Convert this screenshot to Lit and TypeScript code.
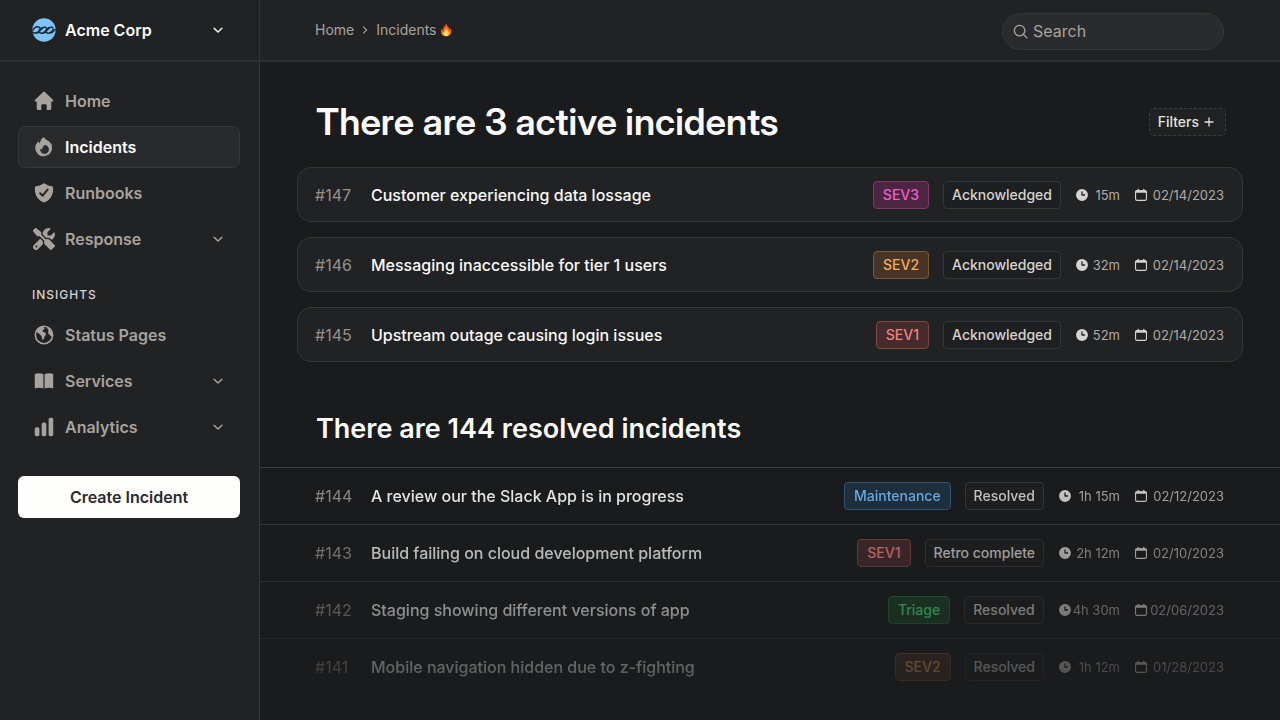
import { LitElement, html, css, svg } from "lit";
import { customElement, property } from "lit/decorators.js";

const icons: Record<string, unknown> = {
  home: svg`<path fill="currentColor" d="M10.8 1.8a1.15 1.15 0 0 0-1.6 0L1.7 9a.85.85 0 0 0 .6 1.45H3.4v6.7c0 .6.45 1.05 1.05 1.05h2.3c.45 0 .8-.35.8-.8v-3.3c0-.6.45-1.05 1.05-1.05h2.8c.6 0 1.05.45 1.05 1.05v3.3c0 .45.35.8.8.8h2.3c.6 0 1.05-.45 1.05-1.05v-6.7h1.1A.85.85 0 0 0 18.3 9z"/>`,
  fire: svg`<path fill="currentColor" fill-rule="evenodd" d="M10.3 1.6a.8.8 0 0 0-1.25-.2C7.6 2.8 6.7 4.5 6.3 6.6c-.4-.3-.7-.7-.95-1.15a.65.65 0 0 0-1.05-.1A7.7 7.7 0 1 0 14.2 4.6c-1.5-.6-3-1.6-3.9-3zM10.9 8.2c-1.6.9-2.5 2.4-2.7 4.2-.6-.2-1.2-.5-1.7-.9a4 4 0 1 0 4.4-3.3z"/>`,
  shield: svg`<path fill="currentColor" fill-rule="evenodd" d="M9.4 1.3a1 1 0 0 1 1.2 0 12.4 12.4 0 0 0 6.7 2.6.9.9 0 0 1 .85.75c.1.75.15 1.55.15 2.35 0 5.2-3.2 9.7-7.9 11.5a1.2 1.2 0 0 1-.8 0C4.9 16.7 1.7 12.2 1.7 7c0-.8.05-1.6.15-2.35a.9.9 0 0 1 .85-.75A12.4 12.4 0 0 0 9.4 1.3zM14.1 7.2a.9.9 0 0 0-1.3-1.15L8.7 11.1 7.2 9.6a.9.9 0 0 0-1.3 1.3l2.25 2.25a.9.9 0 0 0 1.35-.1z"/>`,
  tools: svg`<g transform="scale(.0390625)"><path fill="currentColor" fill-rule="evenodd" d="M78.6 5C69.1-2.4 55.6-1.5 47 7L7 47c-8.5 8.5-9.4 22-2.1 31.6l80 104c4.5 5.9 11.6 9.4 19 9.4h54.1l109 109c-14.7 29-10 65.4 14.3 89.6l112 112c12.5 12.5 32.8 12.5 45.3 0l64-64c12.5-12.5 12.5-32.8 0-45.3l-112-112c-24.2-24.2-60.6-29-89.6-14.3l-109-109V104c0-7.5-3.5-14.5-9.4-19L78.6 5zM19.9 396.1C7.2 408.8 0 426.1 0 444.1C0 481.6 30.4 512 67.9 512c18 0 35.3-7.2 48-19.9L233.7 374.3c-7.8-20.9-9-43.6-3.6-65.1l-61.7-61.7L19.9 396.1zM512 144c0-10.5-1.1-20.7-3.2-30.5c-2.4-11.2-16.1-14.1-24.2-6l-63.9 63.9c-3 3-7.1 4.7-11.3 4.7H352c-8.8 0-16-7.2-16-16V102.6c0-4.2 1.7-8.3 4.7-11.3l63.9-63.9c8.1-8.1 5.2-21.8-6-24.2C388.7 1.1 378.5 0 368 0C288.5 0 224 64.5 224 144l0 .8 85.3 85.3c36-9.1 75.8 .5 104 28.7L429 274.5c49-23 83-72.8 83-130.5zM56 432a24 24 0 1 1 48 0 24 24 0 1 1 -48 0z"/></g>`,
  globe: svg`<circle cx="10" cy="10" r="7.9" fill="none" stroke="currentColor" stroke-width="1.4"/><path fill="currentColor" d="M2.8 6.8 5.6 3.2 9 2.3c1 .8 1.5 1.3 1.3 2.1-.2.8-1.3.9-1.5 1.7-.2.7.5 1.2 1.3 1.4 1.2.3 1.9 1.1 1.6 2.1-.3.9-1.1 1.5-1.3 2.5-.2 1-.7 2.1-1.5 2.3-.8-.4-.8-1.7-1-2.7-.2-.9-1-1.4-1.7-2.1C5.3 8.7 4.2 7.6 2.8 6.8zM13 3l2.6 1.8 1.9 3.4.2 2.8c-1 .6-1.7.2-2.2-.8-.5-.9-1.5-1-1.7-2.1-.2-1 .5-1.5.2-2.4C13.7 4.9 12.7 4.2 13 3z"/>`,
  book: svg`<path fill="currentColor" d="M9.45 3.9v13C7.4 16 4.6 15.9 2.3 16.6a.55.55 0 0 1-.7-.5V4.3c0-.4.2-.7.6-.85 2.3-.8 5.1-.7 7.25.45zM10.55 3.9v13c2.05-.9 4.85-1 7.15-.3a.55.55 0 0 0 .7-.5V4.3c0-.4-.2-.7-.6-.85-2.3-.8-5.1-.7-7.25.45z"/>`,
  chart: svg`<g fill="currentColor"><rect x="1.6" y="10.2" width="4.2" height="8.2" rx="1.5"/><rect x="7.9" y="5.9" width="4.2" height="12.5" rx="1.5"/><rect x="14.2" y="1.7" width="4.2" height="16.7" rx="1.5"/></g>`,
  down: svg`<path fill="none" stroke="currentColor" stroke-width="2.4" stroke-linecap="round" stroke-linejoin="round" d="m3.5 7 6.5 6.5L16.5 7"/>`,
  right: svg`<path fill="none" stroke="currentColor" stroke-width="2.8" stroke-linecap="round" stroke-linejoin="round" d="m6 2 8 8-8 8"/>`,
  search: svg`<circle cx="8.8" cy="8.8" r="7" fill="none" stroke="currentColor" stroke-width="1.8"/><path stroke="currentColor" stroke-width="1.8" stroke-linecap="round" d="m14 14 4.5 4.5"/>`,
  plus: svg`<path stroke="currentColor" stroke-width="2.6" stroke-linecap="round" d="M10 2v16M2 10h16"/>`,
  clock: svg`<path fill="currentColor" fill-rule="evenodd" d="M10 1.5a8.5 8.5 0 1 0 0 17 8.5 8.5 0 0 0 0-17zM10.9 5.6a.9.9 0 0 0-1.8 0V10c0 .5.4.9.9.9h3.7a.9.9 0 0 0 0-1.8h-2.8z"/>`,
  calendar: svg`<rect x="2.2" y="4" width="15.6" height="13.6" rx="2.3" fill="none" stroke="currentColor" stroke-width="1.6"/><path fill="currentColor" d="M4 3.2h1V2.1a1 1 0 0 1 2 0v1.1h6V2.1a1 1 0 0 1 2 0v1.1h1a2.4 2.4 0 0 1 2.4 2.4v1.3H1.6V5.6A2.4 2.4 0 0 1 4 3.2z"/>`,
};

@customElement("app-icon")
class AppIcon extends LitElement {
  @property() name = "";
  static styles = css`
    :host { display: block; flex: none; width: 22px; height: 22px; }
    .glyph { display: block; width: 100%; height: 100%; overflow: visible; }
  `;
  render() {
    return html`<svg class="glyph" viewBox="0 0 20 20" aria-hidden="true">${icons[this.name]}</svg>`;
  }
}

interface Incident {
  id: number;
  title: string;
  tag: string;
  tone: string;
  status: string;
  duration: string;
  date: string;
}

const active: Incident[] = [
  { id: 147, title: "Customer experiencing data lossage", tag: "SEV3", tone: "pink", status: "Acknowledged", duration: "15m", date: "02/14/2023" },
  { id: 146, title: "Messaging inaccessible for tier 1 users", tag: "SEV2", tone: "orange", status: "Acknowledged", duration: "32m", date: "02/14/2023" },
  { id: 145, title: "Upstream outage causing login issues", tag: "SEV1", tone: "red", status: "Acknowledged", duration: "52m", date: "02/14/2023" },
];

const resolved: Incident[] = [
  { id: 144, title: "A review our the Slack App is in progress", tag: "Maintenance", tone: "blue", status: "Resolved", duration: "1h 15m", date: "02/12/2023" },
  { id: 143, title: "Build failing on cloud development platform", tag: "SEV1", tone: "red", status: "Retro complete", duration: "2h 12m", date: "02/10/2023" },
  { id: 142, title: "Staging showing different versions of app", tag: "Triage", tone: "green", status: "Resolved", duration: "4h 30m", date: "02/06/2023" },
  { id: 141, title: "Mobile navigation hidden due to z-fighting", tag: "SEV2", tone: "orange", status: "Resolved", duration: "1h 12m", date: "01/28/2023" },
];

@customElement("incident-row")
class IncidentRow extends LitElement {
  @property({ attribute: false }) incident!: Incident;
  @property({ type: Boolean }) long = false;
  static styles = css`
    :host { display: flex; align-items: center; height: 100%; }
    .id { flex: none; width: 56px; font-size: 16px; color: #96918f; }
    .title { flex: 1; min-width: 0; font-size: 16px; font-weight: 500; color: #fafafa; text-decoration: none; white-space: nowrap; overflow: hidden; text-overflow: ellipsis; }
    .meta { display: flex; align-items: center; gap: 14px; font-size: 14px; white-space: nowrap; }
    .tag { box-sizing: border-box; height: 28px; padding: 0 8px; border: 1px solid #363737; border-radius: 4px; background: #1e1f20; color: #d6d3d1; font-weight: 500; line-height: 26px; }
    .tone { padding: 0 9px; }
    .pink { background: #4b2542; border-color: #7c3a6a; color: #f05fcb; }
    .orange { background: #463428; border-color: #80562f; color: #f9ab5c; }
    .red { background: #452b2d; border-color: #83443f; color: #f5827c; }
    .blue { background: #1f3140; border-color: #2f5c85; color: #70b8f5; }
    .green { background: #1b4227; border-color: #236f3b; color: #4be878; }
    .fact { display: flex; align-items: center; justify-content: space-between; gap: 1px; font-size: 13px; color: #b0aba8; }
    .duration { min-width: 45px; }
    .long { min-width: 62px; }
    .date { min-width: 90px; }
    .small { width: 14px; height: 14px; color: #d6d3d1; }
  `;
  render() {
    const i = this.incident;
    return html`
      <span class="id">#${i.id}</span>
      <a class="title" href="#${i.id}">${i.title}</a>
      <div class="meta">
        <span class="tag tone ${i.tone}">${i.tag}</span>
        <span class="tag">${i.status}</span>
        <span class="fact duration ${this.long ? "long" : ""}"><app-icon class="small" name="clock"></app-icon>${i.duration}</span>
        <span class="fact date"><app-icon class="small" name="calendar"></app-icon>${i.date}</span>
      </div>`;
  }
}

@customElement("app-root")
class AppRoot extends LitElement {
  static styles = css`
    :host { display: grid; grid-template-columns: 260px minmax(0, 1fr); min-height: 100vh; background: #1a1b1c; color: #fafafa; font-family: Inter, "Liberation Sans", sans-serif; font-size: 16px; line-height: 24px; }
    * { box-sizing: border-box; }
    h1, h2, h3, ul { margin: 0; padding: 0; list-style: none; }
    button { font: inherit; cursor: pointer; }
    .sidebar { border-right: 1px solid #343536; background: #212223; }
    .account { display: flex; align-items: center; gap: 9px; width: 100%; height: 62px; padding: 0 35px 0 32px; border: 0; border-bottom: 2px solid #2d2e2f; background: none; color: #fafafa; font-weight: 600; text-align: left; }
    .logo { width: 24px; height: 24px; }
    .grow { flex: 1; }
    .chevron { width: 12px; height: 12px; }
    .nav { display: flex; flex-direction: column; padding: 18px 19px 0 18px; }
    .list { display: flex; flex-direction: column; gap: 4px; }
    .item { display: flex; align-items: center; gap: 10px; height: 42px; padding: 0 15px 0 14px; border: 1px solid transparent; border-radius: 7px; color: #a8a29e; font-weight: 600; text-decoration: none; }
    .current { border-color: #353637; background: #282a2b; color: #fafafa; }
    .item app-icon { color: #a8a29e; }
    .caption { padding: 25px 14px 9px; font-size: 12px; line-height: 20px; font-weight: 500; letter-spacing: 1px; color: #d6d3d1; }
    .create { height: 42px; margin-top: 28px; border: 0; border-radius: 6px; background: #fefefd; color: #2b2b2c; font-weight: 600; }
    .page { display: flex; flex-direction: column; min-width: 0; }
    .topbar { display: flex; align-items: center; justify-content: space-between; height: 62px; padding: 0 56px 0 55px; border-bottom: 2px solid #2d2e2f; background: #212223; }
    .crumbs { display: flex; align-items: center; gap: 7px; color: #a8a29e; font-size: 14px; }
    .crumbs a { color: inherit; text-decoration: none; }
    .crumbs .chevron { width: 8px; height: 8px; }
    .here { display: flex; align-items: center; gap: 3px; }
    .flame { width: 12px; height: 14px; }
    .search { display: flex; align-items: center; gap: 5px; width: 222px; height: 37px; margin-top: 2px; padding: 0 10px; border: 1px solid #363838; border-radius: 19px; background: #292b2c; color: #a8a29e; }
    .search app-icon { width: 15px; height: 15px; }
    .search input { flex: 1; min-width: 0; padding: 0; border: 0; outline: 0; background: none; color: #fafafa; font: inherit; }
    .search input::placeholder { color: #a8a29e; opacity: 1; }
    .headline { display: flex; align-items: center; justify-content: space-between; padding: 35px 54px 21px 56px; }
    h1 { font-family: "Inter Display", Inter, "Liberation Sans", sans-serif; font-size: 37px; line-height: 49px; font-weight: 600; }
    h2 { padding: 48px 56px 20px; font-size: 27px; line-height: 37px; font-weight: 600; }
    .filters { display: flex; align-items: center; gap: 5px; height: 28px; padding: 0 11px 0 8px; border: 1px dashed #3b3c3c; border-radius: 5px; background: #202122; color: #e2e0de; font-size: 14px; font-weight: 500; }
    .filters app-icon { width: 10px; height: 10px; }
    .cards { display: flex; flex-direction: column; gap: 15px; padding: 0 37px; }
    .card { height: 55px; padding: 0 18px 0 17px; border: 1px solid #353737; border-radius: 14px; background: #212223; }
    .rows { mask-image: linear-gradient(#000 0%, transparent 130%); }
    .row { height: 57px; padding: 0 56px 0 55px; border-top: 1px solid #3a3b3c; }
  `;

  private item(icon: string, label: string, more = false, current = false) {
    return html`<li><a class="item ${current ? "current" : ""}" href="#${label}">
      <app-icon name=${icon}></app-icon><span class="grow">${label}</span>
      ${more ? html`<app-icon class="chevron" name="down"></app-icon>` : ""}
    </a></li>`;
  }

  render() {
    return html`
      <aside class="sidebar">
        <button class="account">
          <svg class="logo" viewBox="0 0 72 72" aria-hidden="true">
            <circle cx="36" cy="36" r="35" fill="#7cc5fb"/>
            <g fill="none" stroke="#182b3b" stroke-width="4" stroke-linecap="round">
              <path d="M2 37C8 27 15 25 21 27C27 30 22 38 17 42C12 46 5 46 2 42"/>
              <path d="M12 46C26 48 26 25 40 27C47 30 42 38 37 42C32 46 26 46 23 44C18 40 25 32 30 29"/>
              <path d="M32 46C46 48 46 25 60 27C67 30 62 38 57 42C52 46 46 46 43 44C38 40 45 32 50 29"/>
              <path d="M54 45C63 45 65 38 70 34"/>
            </g>
          </svg>
          <span class="grow">Acme Corp</span>
          <app-icon class="chevron" name="down"></app-icon>
        </button>
        <nav class="nav">
          <ul class="list">
            ${this.item("home", "Home")}
            ${this.item("fire", "Incidents", false, true)}
            ${this.item("shield", "Runbooks")}
            ${this.item("tools", "Response", true)}
          </ul>
          <h3 class="caption">INSIGHTS</h3>
          <ul class="list">
            ${this.item("globe", "Status Pages")}
            ${this.item("book", "Services", true)}
            ${this.item("chart", "Analytics", true)}
          </ul>
          <button class="create">Create Incident</button>
        </nav>
      </aside>
      <div class="page">
        <header class="topbar">
          <nav class="crumbs" aria-label="Breadcrumb">
            <a href="#home">Home</a>
            <app-icon class="chevron" name="right"></app-icon>
            <a class="here" href="#incidents">Incidents
              <svg class="flame" viewBox="0 0 28 30" aria-hidden="true">
                <path fill="#f4511e" d="M14 0c1 5 8 9 9 14l2-3c4 9 1 18-10 19C5 30 0 23 3 13l3 3C6 9 13 6 14 0z"/>
                <path fill="#ff9d1c" d="M14 6c0 5 7 8 7 13l2-3c1 8-2 13-9 13S4 24 6 18l3 2c0-6 5-8 5-14z"/>
                <path fill="#ffe873" d="M14 12c1 5 7 7 6 12-1 3-3 5-6 5s-7-2-6-7l2 1c0-4 4-6 4-11z"/>
              </svg>
            </a>
          </nav>
          <label class="search">
            <app-icon name="search"></app-icon>
            <input type="search" placeholder="Search" aria-label="Search">
          </label>
        </header>
        <main>
          <div class="headline">
            <h1>There are 3 active incidents</h1>
            <button class="filters">Filters <app-icon name="plus"></app-icon></button>
          </div>
          <ul class="cards">
            ${active.map((i) => html`<li class="card"><incident-row .incident=${i}></incident-row></li>`)}
          </ul>
          <h2>There are 144 resolved incidents</h2>
          <ul class="rows">
            ${resolved.map((i) => html`<li class="row"><incident-row long .incident=${i}></incident-row></li>`)}
          </ul>
        </main>
      </div>`;
  }
}
